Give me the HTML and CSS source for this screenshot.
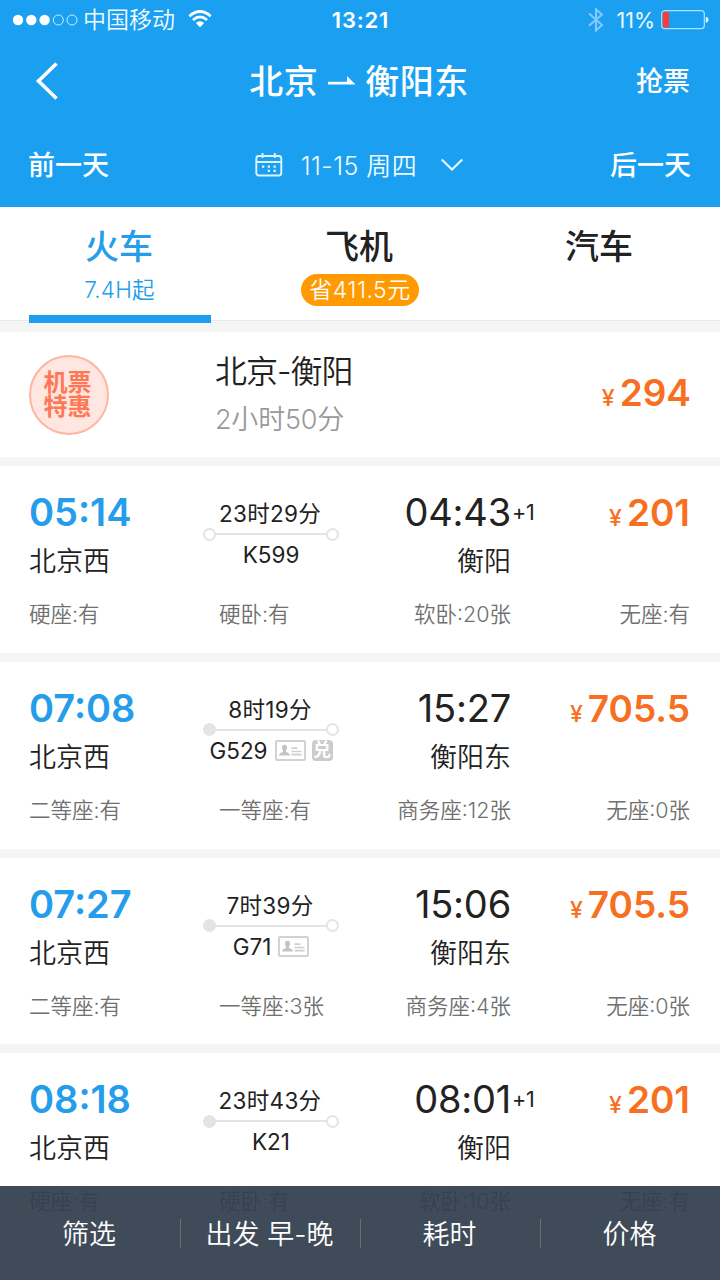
FILE: index.html
```html
<!DOCTYPE html>
<html lang="zh-CN">
<head>
<meta charset="utf-8">
<title>北京 - 衡阳东</title>
<link rel="stylesheet" href="styles.css">
</head>
<body>
<div class="app">
  <header class="header">
    <div class="status">
      <div class="status-left">
        <svg class="signal" width="66" height="12" viewBox="0 0 66 12"><g fill="#fff"><circle cx="6" cy="6" r="5.2"/><circle cx="19.3" cy="6" r="5.2"/><circle cx="32.6" cy="6" r="5.2"/></g><g fill="none" stroke="#c4f0ff" stroke-width="1"><circle cx="46.3" cy="6" r="5"/><circle cx="60" cy="6" r="5"/></g></svg>
        <span class="carrier">中国移动</span>
        <svg class="wifi" width="24" height="18" viewBox="0 0 24 18"><g fill="none" stroke="#fff" stroke-width="2.7"><path d="M1.3 6.2Q12-3.2 22.7 6.2"/><path d="M5 10Q12 3.8 19 10"/></g><path d="M7.8 13Q12 9.3 16.2 13L12 17.3Z" fill="#fff"/></svg>
      </div>
      <span class="clock">13:21</span>
      <div class="status-right">
        <svg width="16" height="26" viewBox="0 0 16 26" fill="none" stroke="#83caff" stroke-width="2"><path d="M1 6.5L14 18L8 23.5V2.5L14 7.5L1 18.7"/></svg>
        <span class="percent">11%</span>
        <svg class="battery" width="48" height="20" viewBox="0 0 48 20"><rect x=".7" y=".7" width="42.6" height="18" rx="3" fill="none" stroke="#a6e4ff" stroke-width="1.2"/><path d="M3 2H8V17.5H3Q1.8 17.5 1.8 16V3.5Q1.8 2 3 2Z" fill="#fb3b36"/><path d="M44.8 6.8Q47.5 7.4 47.5 9.8T44.8 12.8Z" fill="#fff"/></svg>
      </div>
    </div>
    <div class="nav">
      <svg class="back" width="26" height="40" viewBox="0 0 26 40" fill="none" stroke="#fff" stroke-width="3.6"><path d="M21.5 2.5L3.5 20L21.5 37.5"/></svg>
      <h1 class="title"><span>北京</span><svg width="28" height="10" viewBox="0 0 28 10"><path d="M0 5.8H19V0L27.5 8.5H0Z" fill="#fff"/></svg><span>衡阳东</span></h1>
      <span class="grab">抢票</span>
    </div>
    <div class="dates">
      <span class="day">前一天</span>
      <div class="date">
        <svg width="28" height="24" viewBox="0 0 28 24"><g fill="none" stroke="#dff4ff" stroke-width="1.9"><rect x="1.3" y="3" width="25" height="19.5" rx="2.5"/><path d="M1.5 9H26M7.5 0V5M19.8 0V5"/></g><path d="M7 12.5h2.3v2.3H7zM12.7 12.5H15v2.3h-2.3zM18.5 12.5h2.3v2.3h-2.3zM12.7 16.7H15V19h-2.3zM18.5 16.7h2.3V19h-2.3z" fill="#dff4ff"/></svg>
        <span class="date-text">11-15 周四</span>
        <svg width="24" height="14" viewBox="0 0 24 14" fill="none" stroke="#e8f8ff" stroke-width="2.2"><path d="M1.7 1.5L12 11.5L22.3 1.5"/></svg>
      </div>
      <span class="day">后一天</span>
    </div>
  </header>

  <nav class="tabs">
    <div class="tab active"><b>火车</b><span class="tab-note">7.4H起</span></div>
    <div class="tab"><b>飞机</b><span class="pill">省411.5元</span></div>
    <div class="tab"><b>汽车</b></div>
  </nav>

  <section class="promo">
    <div class="seal">机票<br>特惠</div>
    <div class="promo-info"><p class="promo-route">北京-衡阳</p><p class="promo-time">2小时50分</p></div>
    <div class="price"><small>¥</small>294</div>
  </section>

  <article class="train">
    <div class="trip">
      <div class="from"><p class="time">05:14</p><p class="station">北京西</p></div>
      <div class="mid"><p class="duration">23时29分</p><div class="track"><i></i><i></i></div><p class="number">K599</p></div>
      <div class="to"><p class="time">04:43<sup>+1</sup></p><p class="station">衡阳</p></div>
      <div class="price"><small>¥</small>201</div>
    </div>
    <div class="seats"><span>硬座:有</span><span>硬卧:有</span><span>软卧:20张</span><span>无座:有</span></div>
  </article>

  <article class="train">
    <div class="trip">
      <div class="from"><p class="time">07:08</p><p class="station">北京西</p></div>
      <div class="mid"><p class="duration">8时19分</p><div class="track"><i class="solid"></i><i></i></div><p class="number">G529<svg class="idcard" width="31" height="21" viewBox="0 0 31 21"><rect x="1" y="1" width="29" height="19" rx="1" fill="none" stroke="#d2d2d2" stroke-width="2"/><ellipse cx="9.5" cy="7.8" rx="2.5" ry="3" fill="#c4c4c4"/><path d="M4 15.5Q4.5 12.5 8 12V9h3v3q3.5.5 4 3.5z" fill="#c4c4c4"/><path d="M16.5 8.2h6M16.5 11.5h10M16.5 14.7h10" stroke="#cecece" stroke-width="1.7"/></svg><span class="redeem">兑</span></p></div>
      <div class="to"><p class="time">15:27</p><p class="station">衡阳东</p></div>
      <div class="price"><small>¥</small>705.5</div>
    </div>
    <div class="seats"><span>二等座:有</span><span>一等座:有</span><span>商务座:12张</span><span>无座:0张</span></div>
  </article>

  <article class="train">
    <div class="trip">
      <div class="from"><p class="time">07:27</p><p class="station">北京西</p></div>
      <div class="mid"><p class="duration">7时39分</p><div class="track"><i class="solid"></i><i></i></div><p class="number">G71<svg class="idcard" width="31" height="21" viewBox="0 0 31 21"><rect x="1" y="1" width="29" height="19" rx="1" fill="none" stroke="#d2d2d2" stroke-width="2"/><ellipse cx="9.5" cy="7.8" rx="2.5" ry="3" fill="#c4c4c4"/><path d="M4 15.5Q4.5 12.5 8 12V9h3v3q3.5.5 4 3.5z" fill="#c4c4c4"/><path d="M16.5 8.2h6M16.5 11.5h10M16.5 14.7h10" stroke="#cecece" stroke-width="1.7"/></svg></p></div>
      <div class="to"><p class="time">15:06</p><p class="station">衡阳东</p></div>
      <div class="price"><small>¥</small>705.5</div>
    </div>
    <div class="seats"><span>二等座:有</span><span>一等座:3张</span><span>商务座:4张</span><span>无座:0张</span></div>
  </article>

  <article class="train">
    <div class="trip">
      <div class="from"><p class="time">08:18</p><p class="station">北京西</p></div>
      <div class="mid"><p class="duration">23时43分</p><div class="track"><i class="solid"></i><i></i></div><p class="number">K21</p></div>
      <div class="to"><p class="time">08:01<sup>+1</sup></p><p class="station">衡阳</p></div>
      <div class="price"><small>¥</small>201</div>
    </div>
    <div class="seats"><span>硬座:有</span><span>硬卧:有</span><span>软卧:10张</span><span>无座:有</span></div>
  </article>

  <footer class="toolbar">
    <span>筛选</span><span>出发 早-晚</span><span>耗时</span><span>价格</span>
  </footer>
</div>
</body>
</html>
```
FILE: styles.css
```css
* { box-sizing: border-box; }
body, p, h1 { margin: 0; }
body {
  font-family: Inter, "Noto Sans CJK SC", sans-serif;
  color: #222;
  background: #fff;
}
.app {
  position: relative;
  width: 720px;
  height: 1280px;
  overflow: hidden;
  background: #fff;
}

/* Header */
.header { height: 207px; background: #1b9ff0; color: #fff; }
.status {
  display: grid;
  grid-template-columns: 1fr auto 1fr;
  align-items: center;
  height: 40px;
  padding: 0 11px 0 12px;
}
.status-left, .status-right { display: flex; align-items: center; }
.status-right { justify-content: flex-end; }
.carrier { margin-left: 5px; padding-top: 1px; font-size: 23px; line-height: 39px; font-weight: 350; color: #f0fcff; }
.wifi { margin-left: 13px; margin-bottom: 3px; }
.clock { font-size: 22px; font-weight: 600; letter-spacing: .8px; }
.percent { margin: 0 6px 0 12px; font-size: 21.5px; color: #eafaff; }
.nav {
  display: grid;
  grid-template-columns: 1fr auto 1fr;
  align-items: center;
  height: 82px;
  padding: 0 30px 0 35px;
}
.title {
  display: flex;
  align-items: center;
  gap: 10px;
  margin-right: 7px;
  font-size: 34px;
  line-height: 50px;
  letter-spacing: .5px;
  font-weight: 500;
}
.title span, .grab { padding-top: 2px; }
.title svg { margin-right: -1px; }
.grab { justify-self: end; font-size: 27px; font-weight: 500; line-height: 40px; }
.dates {
  display: flex;
  align-items: center;
  justify-content: space-between;
  height: 85px;
  padding: 0 29px 0 28px;
}
.day { padding-top: 3px; font-size: 27px; font-weight: 500; line-height: 42px; }
.date { display: flex; align-items: center; font-weight: 350; color: #f0fbff; }
.date-text { margin: 0 23px 0 18px; padding-top: 2px; font-size: 25px; line-height: 38px; letter-spacing: .5px; }

/* Tabs */
.tabs {
  display: grid;
  grid-template-columns: 29px 182px 298px 182px 29px;
  height: 114px;
  border-bottom: 1px solid #e9e9e9;
}
.tab {
  display: flex;
  flex-direction: column;
  align-items: center;
  height: 116px;
  padding-top: 16px;
}
.tab:first-child { grid-column: 2; }
.tab b { margin-right: 2px; font-size: 34px; line-height: 48px; font-weight: 500; }
.active { position: relative; color: #269dea; border-bottom: 8px solid #1b9ff0; }
.tab-note { margin: 3px 1px 0 0; font-size: 22.5px; line-height: 32px; font-weight: 350; letter-spacing: .2px; }
.pill {
  margin-top: 3px;
  padding: 0 8px;
  height: 32px;
  border-radius: 16px;
  background: #ff9a00;
  color: #fff;
  font-size: 23px;
  line-height: 32px;
  letter-spacing: .5px;
  font-weight: 350;
}

/* Flight offer */
.promo {
  display: flex;
  align-items: center;
  height: 145px;
  padding: 0 29px;
  border-top: 11px solid #f5f5f5;
  border-bottom: 9px solid #f5f5f5;
}
.seal {
  width: 80px;
  height: 80px;
  padding: 14px 3px 0 0;
  border: 2px solid #ffb5a1;
  border-radius: 50%;
  background: #ffe6e0;
  color: #ff7856;
  font-size: 24px;
  line-height: 24px;
  font-weight: 700;
  text-align: center;
}
.promo-info { margin-left: 106px; padding-top: 2px; }
.promo-route { font-size: 32px; line-height: 48px; letter-spacing: -1px; font-weight: 350; }
.promo-time { font-size: 27px; line-height: 48px; font-weight: 350; letter-spacing: -.2px; color: #999; }
.price {
  color: #f77021;
  font-size: 37px;
  line-height: 48px;
  font-weight: 600;
  text-align: right;
  white-space: nowrap;
}
.price small { margin-right: 5px; font-size: 23px; font-weight: 500; }
.promo .price { margin-left: auto; padding-top: 2px; }

/* Train cards */
.train {
  height: 195.8px;
  padding: 22px 30px 0 29px;
  border-bottom: 9px solid #f5f5f5;
}
.trip { display: grid; grid-template-columns: 174px 136px 172px 179px; height: 97px; }
.time { font-size: 38px; line-height: 48px; }
.from .time { color: #269dea; font-weight: 600; }
.station { padding-top: 2px; font-size: 27px; line-height: 48px; font-weight: 350; }
.to { text-align: right; }
.to .time { position: relative; letter-spacing: -.2px; }
.to sup { position: absolute; left: 100%; top: 0; margin-left: 1px; font-size: 21.5px; line-height: 48px; }
.trip .price { padding-top: 1px; }
.mid { padding-top: 14px; text-align: center; }
.duration { margin-right: 2px; font-size: 22.5px; line-height: 24px; letter-spacing: .3px; font-weight: 370; }
.track {
  display: flex;
  justify-content: space-between;
  align-items: center;
  height: 16px;
  background: linear-gradient(#e4e4e4, #e4e4e4) center / 116px 2px no-repeat;
}
.track i { width: 13px; height: 13px; border: 2px solid #e4e4e4; border-radius: 50%; background: #fff; }
.track .solid { background: #e4e4e4; }
.number {
  display: flex;
  align-items: center;
  justify-content: center;
  font-size: 22.5px;
  line-height: 25px;
}
.idcard { margin-left: 7px; }
.redeem {
  width: 21px;
  height: 21px;
  margin-left: 6px;
  border-radius: 4px;
  background: #ccc;
  color: #fff;
  font-size: 18px;
  line-height: 20px;
  font-weight: 700;
  text-align: center;
}
.seats {
  display: grid;
  grid-template-columns: 190px 128px 164px 179px;
  margin-top: 9px;
  font-size: 21.5px;
  line-height: 40px;
  font-weight: 350;
  color: #707070;
  white-space: nowrap;
}
.seats span:nth-child(n+3) { text-align: right; }

/* Sort bar laid over the list */
.toolbar {
  position: absolute;
  left: 0;
  right: 0;
  bottom: 0;
  display: grid;
  grid-template-columns: repeat(4, 1fr);
  height: 94px;
  padding-top: 33px;
  background: rgba(48, 61, 76, .93);
  color: #fff;
  font-size: 27px;
  line-height: 31px;
  font-weight: 350;
  text-align: center;
}
.toolbar span { height: 29px; padding-right: 2px; }
.toolbar span + span { border-left: 1px solid #66707b; }
```
